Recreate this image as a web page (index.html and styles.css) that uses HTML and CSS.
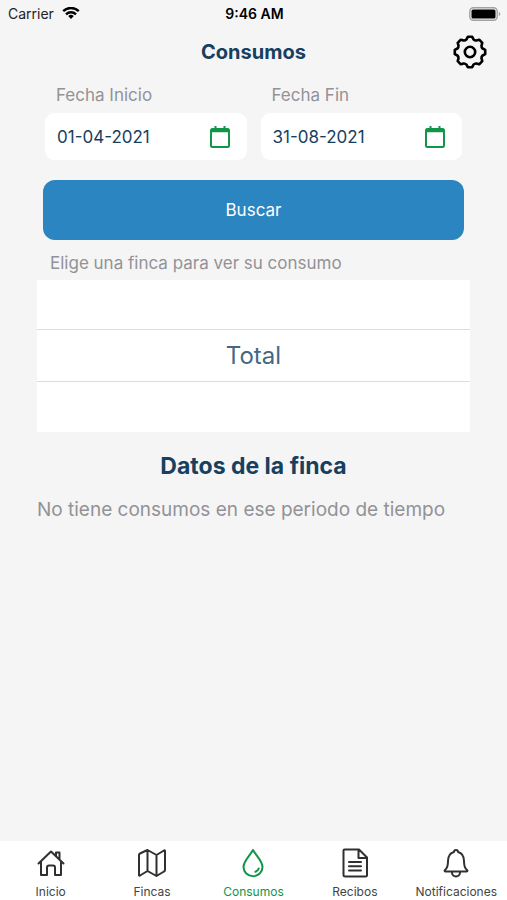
FILE: index.html
```
<!DOCTYPE html>
<html lang="es">
<head>
    <meta charset="UTF-8">
    <meta name="viewport" content="width=device-width, initial-scale=1">
    <title>Consumos</title>
    <link rel="stylesheet" href="styles.css">
</head>
<body>
    <div class="status-bar">
        <div class="carrier">
            <span>Carrier</span>
            <svg width="18" height="14" viewBox="0 0 18 14" fill="none" stroke="#000" stroke-width="2.4">
                <path d="M1.2 4.200a11 11 0 0 1 15.6 0"/>
                <path d="M4 7.300a7.2 7.2 0 0 1 10 0"/>
                <path d="M9 12l-2.8-2.9a4 4 0 0 1 5.6 0z" fill="#000" stroke="none"/>
            </svg>
        </div>
        <div class="time">9:46 AM</div>
        <div class="battery">
            <svg width="32" height="14" viewBox="0 0 32 14">
                <rect x=".8" y=".8" width="27.4" height="12.4" rx="3.6" fill="none" stroke="#a2a2a2" stroke-width="1.4"/>
                <rect x="2.5" y="2.5" width="24" height="9" rx="1.6" fill="#000"/>
                <path d="M29.8 5v4q1.6-.6 1.6-2t-1.6-2z" fill="#a2a2a2"/>
            </svg>
        </div>
    </div>

    <header class="header">
        <h1>Consumos</h1>
        <button class="settings" type="button" aria-label="Ajustes">
            <svg width="34" height="34" viewBox="-17 -17 34 34" fill="none" stroke="#000" stroke-width="2.6" stroke-linejoin="round">
                <path d="M-2.2-15.2H2.2L3.500-12.600Q4.800-11.300 6.400-11.500L9.200-12.300L12.300-9.200L11.500-6.400Q11.300-4.800 12.600-3.500L15.200-2.200V2.200L12.600 3.500Q11.300 4.800 11.500 6.400L12.300 9.200L9.200 12.300L6.400 11.500Q4.800 11.300 3.500 12.600L2.200 15.200H-2.200L-3.500 12.600Q-4.800 11.300-6.400 11.500L-9.200 12.300L-12.300 9.200L-11.500 6.400Q-11.300 4.800-12.600 3.500L-15.200 2.200V-2.200L-12.600-3.500Q-11.300-4.800-11.500-6.400L-12.300-9.200L-9.200-12.300L-6.400-11.500Q-4.800-11.300-3.500-12.600Z"/>
                <circle r="5.2"/>
            </svg>
        </button>
    </header>

    <main class="content">
        <form class="search">
            <div class="dates">
                <div class="date">
                    <label for="inicio">Fecha Inicio</label>
                    <div class="date-box">
                        <input type="text" id="inicio" value="01-04-2021">
                        <button type="button" aria-label="Abrir calendario de inicio">
                            <svg width="20" height="24" viewBox="0 0 20 24" fill="none" stroke="#109647" stroke-width="2">
                                <rect x="1" y="4" width="18" height="18" rx="1.5"/>
                                <path d="M1 5.5h18" stroke-width="3.5"/>
                                <path d="M5.5 1v4M14.5 1v4"/>
                            </svg>
                        </button>
                    </div>
                </div>
                <div class="date">
                    <label for="fin">Fecha Fin</label>
                    <div class="date-box">
                        <input type="text" id="fin" value="31-08-2021">
                        <button type="button" aria-label="Abrir calendario de fin">
                            <svg width="20" height="24" viewBox="0 0 20 24" fill="none" stroke="#109647" stroke-width="2">
                                <rect x="1" y="4" width="18" height="18" rx="1.5"/>
                                <path d="M1 5.5h18" stroke-width="3.5"/>
                                <path d="M5.5 1v4M14.5 1v4"/>
                            </svg>
                        </button>
                    </div>
                </div>
            </div>
            <button class="submit" type="button">Buscar</button>
        </form>

        <label class="picker-label" for="finca">Elige una finca para ver su consumo</label>
        <div class="picker">
            <select id="finca">
                <option>Total</option>
            </select>
        </div>

        <h2>Datos de la finca</h2>
        <p class="empty">No tiene consumos en ese periodo de tiempo</p>
    </main>

    <nav class="tabs">
        <a href="#inicio">
            <svg width="30" height="30" viewBox="0 0 30 30">
                <path d="M2.500 15.500L15 3.500l12.500 12M5 13.500V27h6v-7.500q0-2 2-2h4q2 0 2 2V27h6V13.500M20 8V4.500h3.500v7"/>
            </svg>
            <span>Inicio</span>
        </a>
        <a href="#fincas">
            <svg width="30" height="30" viewBox="0 0 30 30">
                <path d="M2 7q0-1 1-1.500L10.500 2l9 5L27 2.500q1-.5 1 .5v19q0 1-1 1.500L19.500 28l-9-5L3 27.500q-1 .5-1-.5zM10.500 2v21M19.500 7v21"/>
            </svg>
            <span>Fincas</span>
        </a>
        <a href="#consumos" class="active">
            <svg width="30" height="30" viewBox="0 0 30 30">
                <path d="M15 2C12 7.500 5.500 13 5.500 19a9.500 9.200 0 0 0 19 0C24.500 13 18 7.500 15 2z"/>
                <path d="M20.800 20.500q-.8 2.300-3.300 3.300"/>
            </svg>
            <span>Consumos</span>
        </a>
        <a href="#recibos">
            <svg width="30" height="30" viewBox="0 0 30 30">
                <path d="M4.500 1.500H19L27 9.500V27q0 1.500-1.500 1.500h-20Q3.500 28.500 3.500 27V2.500q0-1 1-1zM18.500 1.500V10H27M9 14h12M9 18.300h12M9 22.600h12"/>
            </svg>
            <span>Recibos</span>
        </a>
        <a href="#notificaciones">
            <svg width="30" height="30" viewBox="0 0 30 30">
                <path d="M13 4a2 2 0 0 1 4 0c4.200 1.200 6 4.500 6 9 0 5 .8 7.500 3 9 .8.900.4 1.500-.6 1.500H4.600c-1 0-1.400-.6-.6-1.500 2.200-1.500 3-4 3-9 0-4.500 1.800-7.800 6-9zM11 24.500a4 4 0 0 0 8 0"/>
            </svg>
            <span>Notificaciones</span>
        </a>
    </nav>
</body>
</html>
```

FILE: styles.css
```
:root {
    --navy: #17405f;
    --blue: #2b85c1;
    --green: #109647;
    --gray: #929297;
    --bg: #f5f5f5;
    --surface: #ffffff;
}

* {
    box-sizing: border-box;
}

body {
    font-family: Inter, 'Liberation Sans', sans-serif;
    background: var(--bg);
    color: var(--navy);
    margin: 0;
    min-height: 100vh;
    display: flex;
    flex-direction: column;
}

h1, h2, p {
    margin: 0;
}

button, input, select {
    font-family: inherit;
    border: none;
    background: none;
    padding: 0;
    margin: 0;
}

button {
    cursor: pointer;
}

svg {
    display: block;
}

/* status bar */
.status-bar {
    display: grid;
    grid-template-columns: 1fr auto 1fr;
    align-items: center;
    height: 27px;
    padding: 0 6px 0 8px;
    color: #000;
    font-size: 14px;
}

.carrier {
    display: flex;
    align-items: center;
    gap: 8px;
    color: #222;
}

.time {
    font-weight: 600;
}

.battery {
    justify-self: end;
}

/* header */
.header {
    display: grid;
    grid-template-columns: 1fr auto 1fr;
    align-items: center;
    height: 50px;
    padding: 0 20px;
}

.header h1 {
    grid-column: 2;
    font-size: 20px;
    font-weight: 700;
}

.settings {
    justify-self: end;
}

/* content */
.content {
    flex: 1;
    padding: 7px 37px 20px;
}

.search {
    padding: 0 6px;
}

.dates {
    display: grid;
    grid-template-columns: repeat(2, minmax(0, 1fr));
    gap: 14px;
    padding: 0 2px;
    margin-bottom: 20px;
}

.date label {
    display: block;
    padding: 0 11px;
    margin-bottom: 6px;
    font-size: 17px;
    line-height: 23px;
    color: var(--gray);
}

.date-box {
    display: flex;
    align-items: center;
    height: 47px;
    padding: 0 17px 0 12px;
    border-radius: 9px;
    background: var(--surface);
}

.date-box input {
    flex: 1;
    min-width: 0;
    font-size: 17px;
    color: var(--navy);
}

.submit {
    display: block;
    width: 100%;
    height: 60px;
    border-radius: 12px;
    background: var(--blue);
    color: #fff;
    font-size: 17px;
}

.picker-label {
    display: block;
    padding: 12px 13px 5px;
    font-size: 17px;
    line-height: 23px;
    color: var(--gray);
}

.picker {
    padding: 49px 0 50px;
    background: var(--surface);
}

.picker select {
    display: block;
    appearance: none;
    width: 100%;
    height: 53px;
    border-top: 1px solid #dcdcdc;
    border-bottom: 1px solid #dcdcdc;
    border-radius: 0;
    font-size: 24px;
    color: #456781;
    text-align: center;
    text-align-last: center;
}

h2 {
    margin-top: 19px;
    font-size: 23px;
    line-height: 30px;
    font-weight: 700;
    text-align: center;
}

.empty {
    margin-top: 16px;
    font-size: 19px;
    line-height: 26px;
    color: var(--gray);
}

/* bottom tabs */
.tabs {
    display: grid;
    grid-template-columns: repeat(5, 1fr);
    height: 59px;
    background: var(--surface);
}

.tabs a {
    display: flex;
    flex-direction: column;
    align-items: center;
    gap: 6px;
    padding-top: 7px;
    font-size: 12px;
    line-height: 16px;
    color: #444;
    text-decoration: none;
}

.tabs svg {
    fill: none;
    stroke: #303030;
    stroke-width: 2;
    stroke-linejoin: round;
    stroke-linecap: round;
}

.tabs .active {
    color: var(--green);
}

.tabs .active svg {
    stroke: var(--green);
}
```
